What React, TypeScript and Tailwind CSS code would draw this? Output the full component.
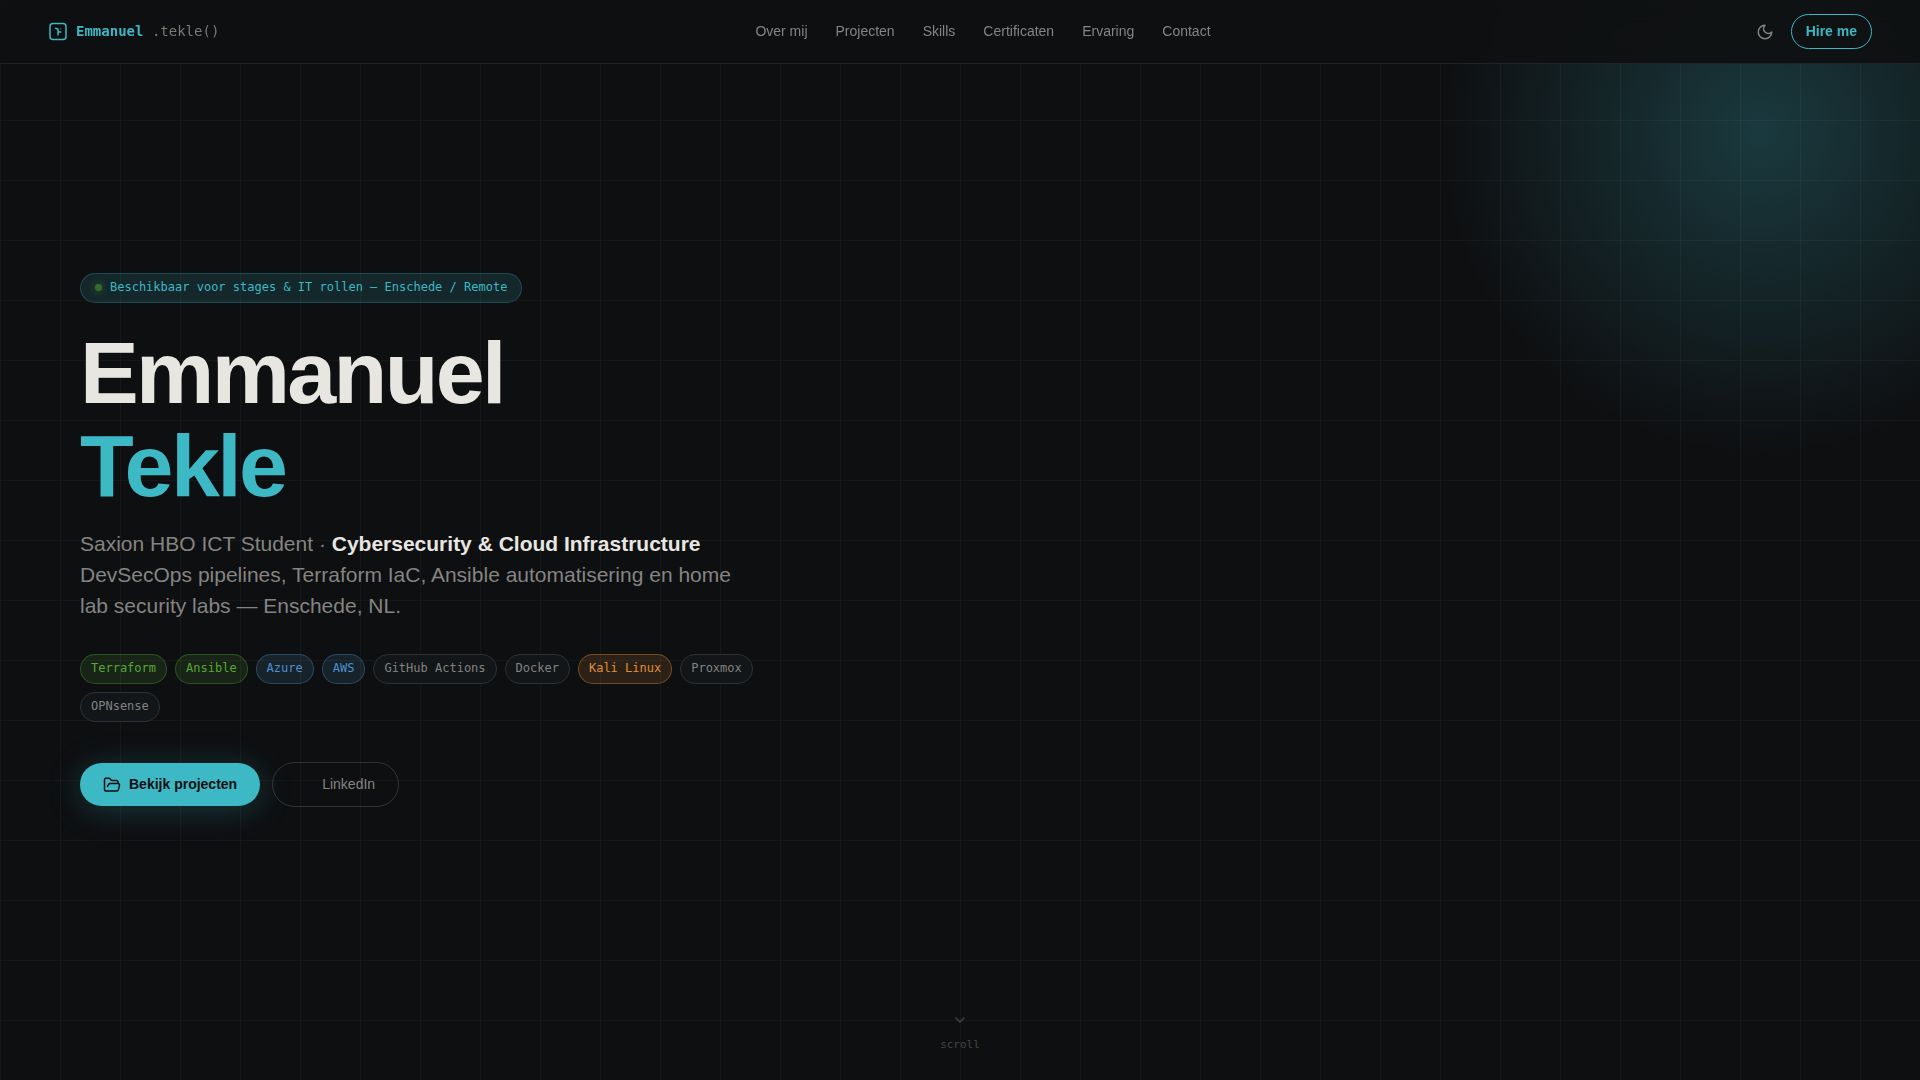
import { useState } from "react";
import { ChevronDown, FolderOpen } from "lucide-react";

const navLinks = [
  { label: "Over mij", href: "#over" },
  { label: "Projecten", href: "#projecten" },
  { label: "Skills", href: "#skills" },
  { label: "Certificaten", href: "#certificaten" },
  { label: "Ervaring", href: "#ervaring" },
  { label: "Contact", href: "#contact" },
];

const tagStyles = {
  green: "text-[#57a639] bg-[#57a639]/15 border-[#57a639]/35",
  blue: "text-[#4f8fcb] bg-[#4f98c3]/15 border-[#4f8fcb]/35",
  orange: "text-[#e08f38] bg-[#e08f38]/15 border-[#e08f38]/40",
  plain: "text-[#838280] bg-[#121618] border-[#2f3132]",
};

const tags: { label: string; tone: keyof typeof tagStyles }[] = [
  { label: "Terraform", tone: "green" },
  { label: "Ansible", tone: "green" },
  { label: "Azure", tone: "blue" },
  { label: "AWS", tone: "blue" },
  { label: "GitHub Actions", tone: "plain" },
  { label: "Docker", tone: "plain" },
  { label: "Kali Linux", tone: "orange" },
  { label: "Proxmox", tone: "plain" },
  { label: "OPNsense", tone: "plain" },
];

function LogoMark() {
  return (
    <svg
      className="h-5 w-5"
      viewBox="0 0 20 20"
      fill="none"
      stroke="currentColor"
      strokeWidth="1.5"
      strokeLinecap="round"
      strokeLinejoin="round"
      aria-hidden="true"
    >
      <rect x="2" y="1.5" width="16" height="16" rx="3" />
      <path d="M7.6 6.3L10 7.3v5.6M10 9.9h2.8" />
      <path d="M12.6 6.5v.4" opacity="0.4" />
    </svg>
  );
}

function MoonIcon() {
  return (
    <svg
      className="h-[18px] w-[18px]"
      viewBox="0 0 24 24"
      fill="none"
      stroke="currentColor"
      strokeWidth="2"
      strokeLinecap="round"
      strokeLinejoin="round"
      aria-hidden="true"
    >
      <path d="M12 3a6 6 0 0 0 9 9 9 9 0 1 1-9-9Z" />
    </svg>
  );
}

function Header() {
  const [dark, setDark] = useState(true);

  return (
    <header className="fixed inset-x-0 top-0 z-10 flex h-16 items-center justify-between border-b border-white/8 bg-[#0e0f11]/90 px-12 backdrop-blur-md">
      <a
        href="#top"
        className="flex items-center gap-2 font-['DejaVu_Sans_Mono',monospace] text-sm/[21px] text-[#3db8c5]"
      >
        <LogoMark />
        <span>
          <span className="font-bold">Emmanuel</span> <span className="text-[#7a7976]">.tekle()</span>
        </span>
      </a>
      <nav className="flex gap-7 text-sm/[21px] text-[#858482]">
        {navLinks.map((link) => (
          <a key={link.href} href={link.href} className="hover:text-[#e8e6e1]">
            {link.label}
          </a>
        ))}
      </nav>
      <div className="flex items-center gap-2">
        <button
          onClick={() => setDark(!dark)}
          aria-label="Thema wisselen"
          aria-pressed={dark}
          className="flex h-9 w-9 items-center justify-center text-[#858482]"
        >
          <MoonIcon />
        </button>
        <a
          href="#contact"
          className="rounded-full border border-[#3db8c5] px-3.5 py-1.5 text-sm/[21px] font-bold text-[#3db8c5]"
        >
          Hire me
        </a>
      </div>
    </header>
  );
}

function Hero() {
  return (
    <main className="relative flex min-h-screen flex-col justify-center px-20 py-24">
      <div className="flex max-w-[680px] flex-col items-start">
        <p className="flex items-center gap-2 rounded-full border border-[#3db8c5]/25 bg-[#3db8c5]/15 px-3.5 pb-[7px] pt-[5px] font-['DejaVu_Sans_Mono',monospace] text-xs/[16px] text-[#3db8c5]">
          <span className="h-[7px] w-[7px] rounded-full bg-[#386b2b] shadow-[0_0_8px_#386b2b]" />
          Beschikbaar voor stages &amp; IT rollen — Enschede / Remote
        </p>
        <h1 className="mt-[23px] text-[88px]/[93px] font-bold tracking-[-0.03em] text-[#e8e6e1]">
          Emmanuel
          <span className="block text-[#3db8c5]">Tekle</span>
        </h1>
        <p className="mt-4 max-w-[660px] text-[21px]/[31px] text-[#858482]">
          Saxion HBO ICT Student · <strong className="text-[#e8e6e1]">Cybersecurity &amp; Cloud Infrastructure</strong>
          <br />
          DevSecOps pipelines, Terraform IaC, Ansible automatisering en home lab security labs — Enschede, NL.
        </p>
        <ul className="mt-[33px] flex flex-wrap gap-2">
          {tags.map((tag) => (
            <li
              key={tag.label}
              className={`rounded-full border px-2.5 pb-[7px] pt-[5px] font-['DejaVu_Sans_Mono',monospace] text-xs/[16px] ${tagStyles[tag.tone]}`}
            >
              {tag.label}
            </li>
          ))}
        </ul>
        <div className="mt-10 flex items-center gap-3">
          <a
            href="#projecten"
            className="flex items-center gap-2 rounded-full bg-[#3db8c5] px-[23px] py-[11px] text-sm/[21px] font-bold text-[#0e0f11] shadow-[0_4px_32px_rgba(61,184,197,0.25)]"
          >
            <FolderOpen className="h-[18px] w-[18px]" />
            Bekijk projecten
          </a>
          <a
            href="#linkedin"
            className="flex items-center gap-2 rounded-full border border-white/15 px-[23px] py-[11px] text-sm/[21px] text-[#858482]"
          >
            <span className="h-[18px] w-[18px]" />
            LinkedIn
          </a>
        </div>
      </div>
      <a
        href="#over"
        className="absolute inset-x-0 bottom-[26px] mx-auto flex w-fit flex-col items-center gap-2 font-['DejaVu_Sans_Mono',monospace] text-[11px]/[18px] text-[#454546]"
      >
        <ChevronDown className="h-4 w-4" />
        scroll
      </a>
    </main>
  );
}

export default function App() {
  return (
    <div
      id="top"
      className="relative overflow-hidden bg-[#0e0f11] font-['Liberation_Sans',Arial,sans-serif]"
    >
      {/* glow and grid sit behind everything, header blurs them */}
      <div className="pointer-events-none absolute -right-[166px] -top-[192px] h-[650px] w-[650px] bg-[radial-gradient(circle,rgba(61,184,197,0.25)_0%,transparent_70%)]" />
      <div className="pointer-events-none absolute inset-0 bg-[linear-gradient(rgba(255,255,255,0.035)_1px,transparent_1px),linear-gradient(90deg,rgba(255,255,255,0.035)_1px,transparent_1px)] bg-size-[60px_60px]" />
      <Header />
      <Hero />
    </div>
  );
}
